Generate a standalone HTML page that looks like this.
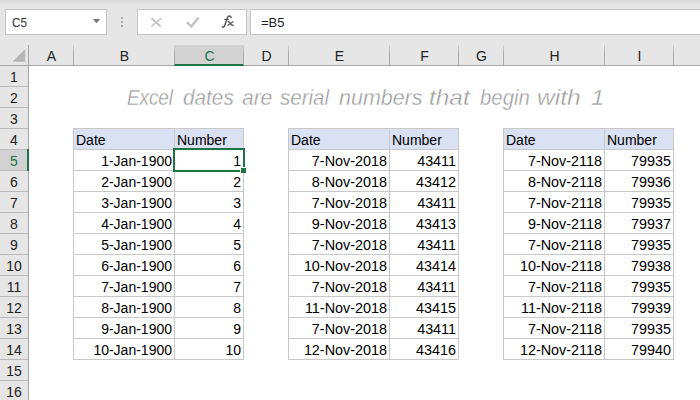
<!DOCTYPE html>
<html><head><meta charset="utf-8"><style>
html,body{margin:0;padding:0;width:700px;height:400px;overflow:hidden;background:#fff}
body{position:relative;font-family:"Liberation Sans", sans-serif}
body>div{position:absolute}
.t{font-size:14px;line-height:20px;white-space:nowrap}
svg{display:block}
</style></head><body>
<div style="left:0px;top:0px;width:700px;height:45px;background:#e6e6e6;"></div>
<div style="left:0;top:0;width:700px;height:5px;background:linear-gradient(#d8d8d8,#e6e6e6)"></div>
<div style="left:5px;top:9px;width:102px;height:26px;background:#c6c6c6;"></div>
<div style="left:6px;top:10px;width:100px;height:24px;background:#ffffff;"></div>
<div class="t" style="left:11.50px;top:12.50px;color:#333;font-size:13px;transform:scaleX(0.9);transform-origin:0 0;">C5</div>
<svg style="position:absolute;left:92px;top:18px" width="9" height="7"><path d="M0.8 1 L8.2 1 L4.5 5.2 Z" fill="#767676"/></svg>
<div style="left:121px;top:17px;width:2px;height:2px;background:#a8a8a8;"></div>
<div style="left:121px;top:21px;width:2px;height:2px;background:#a8a8a8;"></div>
<div style="left:121px;top:25px;width:2px;height:2px;background:#a8a8a8;"></div>
<div style="left:137px;top:9px;width:110px;height:26px;background:#c6c6c6;"></div>
<div style="left:138px;top:10px;width:108px;height:24px;background:#ffffff;"></div>
<svg style="position:absolute;left:0;top:0" width="250" height="40"><path d="M151.6 18.2 L160.6 26.4" stroke="#c2c2c2" stroke-width="2.1" fill="none"/><path d="M161.4 18 L151.4 26.4" stroke="#c6c6c6" stroke-width="1.6" fill="none"/><path d="M187 22.2 L191.2 26.6 L198.6 17.6" stroke="#c4c4c4" stroke-width="2.5" fill="none" stroke-linejoin="round"/><path d="M231 17.4 C230.7 15.7 228.3 15.6 227.6 17.2 L224.6 25.8 C224.1 27.4 222.9 27.6 222.4 26.6" stroke="#5a5a5a" stroke-width="1.5" fill="none" stroke-linecap="round"/><path d="M224.2 19.5 L228.8 19.5" stroke="#5a5a5a" stroke-width="1.2" fill="none"/><path d="M227.6 21.8 C229.2 21.2 229.8 22.5 230.4 23.6 C231 24.8 232 25.6 233.6 25.2" stroke="#5a5a5a" stroke-width="1.4" fill="none"/><path d="M233.6 21.6 L227.4 25.6" stroke="#5a5a5a" stroke-width="1.2" fill="none"/></svg>
<div style="left:250px;top:9px;width:450px;height:26px;background:#c6c6c6;"></div>
<div style="left:251px;top:10px;width:449px;height:24px;background:#ffffff;"></div>
<div class="t" style="left:261.00px;top:12.50px;color:#222;font-size:13px;">=B5</div>
<div style="left:0px;top:45px;width:700px;height:20px;background:#e6e6e6;"></div>
<div style="left:175px;top:45px;width:68px;height:20px;background:#d2d2d2;"></div>
<div style="left:0px;top:65px;width:700px;height:1px;background:#a6a6a6;"></div>
<div style="left:174px;top:64px;width:70px;height:2px;background:#217346;"></div>
<div style="left:28px;top:45px;width:1px;height:20px;background:linear-gradient(#d4d4d4,#b0b0b0 35%,#a8a8a8)"></div>
<div style="left:73px;top:45px;width:1px;height:20px;background:linear-gradient(#d4d4d4,#b0b0b0 35%,#a8a8a8)"></div>
<div style="left:174px;top:45px;width:1px;height:20px;background:linear-gradient(#d4d4d4,#b0b0b0 35%,#a8a8a8)"></div>
<div style="left:243px;top:45px;width:1px;height:20px;background:linear-gradient(#d4d4d4,#b0b0b0 35%,#a8a8a8)"></div>
<div style="left:288px;top:45px;width:1px;height:20px;background:linear-gradient(#d4d4d4,#b0b0b0 35%,#a8a8a8)"></div>
<div style="left:389px;top:45px;width:1px;height:20px;background:linear-gradient(#d4d4d4,#b0b0b0 35%,#a8a8a8)"></div>
<div style="left:458px;top:45px;width:1px;height:20px;background:linear-gradient(#d4d4d4,#b0b0b0 35%,#a8a8a8)"></div>
<div style="left:503px;top:45px;width:1px;height:20px;background:linear-gradient(#d4d4d4,#b0b0b0 35%,#a8a8a8)"></div>
<div style="left:604px;top:45px;width:1px;height:20px;background:linear-gradient(#d4d4d4,#b0b0b0 35%,#a8a8a8)"></div>
<div style="left:673px;top:45px;width:1px;height:20px;background:linear-gradient(#d4d4d4,#b0b0b0 35%,#a8a8a8)"></div>
<div class="t" style="left:21.50px;top:46.15px;width:60px;text-align:center;color:#222;font-size:14px;">A</div>
<div class="t" style="left:94.50px;top:46.15px;width:60px;text-align:center;color:#222;font-size:14px;">B</div>
<div class="t" style="left:179.50px;top:46.15px;width:60px;text-align:center;color:#217346;font-size:14px;">C</div>
<div class="t" style="left:236.50px;top:46.15px;width:60px;text-align:center;color:#222;font-size:14px;">D</div>
<div class="t" style="left:309.50px;top:46.15px;width:60px;text-align:center;color:#222;font-size:14px;">E</div>
<div class="t" style="left:394.50px;top:46.15px;width:60px;text-align:center;color:#222;font-size:14px;">F</div>
<div class="t" style="left:451.50px;top:46.15px;width:60px;text-align:center;color:#222;font-size:14px;">G</div>
<div class="t" style="left:524.50px;top:46.15px;width:60px;text-align:center;color:#222;font-size:14px;">H</div>
<div class="t" style="left:609.50px;top:46.15px;width:60px;text-align:center;color:#222;font-size:14px;">I</div>
<svg style="position:absolute;left:12px;top:48px" width="14" height="14"><path d="M13 1.2 L13 13.8 L0.5 13.8 Z" fill="#b6b6b6"/></svg>
<div style="left:0px;top:66px;width:28px;height:334px;background:#e6e6e6;"></div>
<div style="left:28px;top:45px;width:1px;height:355px;background:#a6a6a6;"></div>
<div style="left:0px;top:86px;width:28px;height:1px;background:#b9b9b9;"></div>
<div class="t" style="left:0.00px;top:67.15px;width:28px;text-align:center;color:#222;font-size:14px;">1</div>
<div style="left:0px;top:107px;width:28px;height:1px;background:#b9b9b9;"></div>
<div class="t" style="left:0.00px;top:88.15px;width:28px;text-align:center;color:#222;font-size:14px;">2</div>
<div style="left:0px;top:128px;width:28px;height:1px;background:#b9b9b9;"></div>
<div class="t" style="left:0.00px;top:109.15px;width:28px;text-align:center;color:#222;font-size:14px;">3</div>
<div style="left:0px;top:149px;width:28px;height:1px;background:#b9b9b9;"></div>
<div class="t" style="left:0.00px;top:130.15px;width:28px;text-align:center;color:#222;font-size:14px;">4</div>
<div style="left:0px;top:150px;width:28px;height:20px;background:#d2d2d2;"></div>
<div style="left:0px;top:170px;width:28px;height:1px;background:#b9b9b9;"></div>
<div style="left:27px;top:149px;width:2px;height:22px;background:#217346;"></div>
<div class="t" style="left:0.00px;top:151.15px;width:28px;text-align:center;color:#217346;font-size:14px;">5</div>
<div style="left:0px;top:191px;width:28px;height:1px;background:#b9b9b9;"></div>
<div class="t" style="left:0.00px;top:172.15px;width:28px;text-align:center;color:#222;font-size:14px;">6</div>
<div style="left:0px;top:212px;width:28px;height:1px;background:#b9b9b9;"></div>
<div class="t" style="left:0.00px;top:193.15px;width:28px;text-align:center;color:#222;font-size:14px;">7</div>
<div style="left:0px;top:233px;width:28px;height:1px;background:#b9b9b9;"></div>
<div class="t" style="left:0.00px;top:214.15px;width:28px;text-align:center;color:#222;font-size:14px;">8</div>
<div style="left:0px;top:254px;width:28px;height:1px;background:#b9b9b9;"></div>
<div class="t" style="left:0.00px;top:235.15px;width:28px;text-align:center;color:#222;font-size:14px;">9</div>
<div style="left:0px;top:275px;width:28px;height:1px;background:#b9b9b9;"></div>
<div class="t" style="left:0.00px;top:256.15px;width:28px;text-align:center;color:#222;font-size:14px;">10</div>
<div style="left:0px;top:296px;width:28px;height:1px;background:#b9b9b9;"></div>
<div class="t" style="left:0.00px;top:277.15px;width:28px;text-align:center;color:#222;font-size:14px;">11</div>
<div style="left:0px;top:317px;width:28px;height:1px;background:#b9b9b9;"></div>
<div class="t" style="left:0.00px;top:298.15px;width:28px;text-align:center;color:#222;font-size:14px;">12</div>
<div style="left:0px;top:338px;width:28px;height:1px;background:#b9b9b9;"></div>
<div class="t" style="left:0.00px;top:319.15px;width:28px;text-align:center;color:#222;font-size:14px;">13</div>
<div style="left:0px;top:359px;width:28px;height:1px;background:#b9b9b9;"></div>
<div class="t" style="left:0.00px;top:340.15px;width:28px;text-align:center;color:#222;font-size:14px;">14</div>
<div style="left:0px;top:380px;width:28px;height:1px;background:#b9b9b9;"></div>
<div class="t" style="left:0.00px;top:361.15px;width:28px;text-align:center;color:#222;font-size:14px;">15</div>
<div class="t" style="left:0.00px;top:382.15px;width:28px;text-align:center;color:#222;font-size:14px;">16</div>
<div style="left:29px;top:66px;width:671px;height:334px;background:#ffffff;"></div>
<div class="t" style="left:127.0px;top:85px;font-size:22px;line-height:26px;font-style:italic;color:#9c9c9c;-webkit-text-stroke:0.35px #fff;transform:scaleX(0.855);transform-origin:0 0">Excel</div>
<div class="t" style="left:182.5px;top:85px;font-size:22px;line-height:26px;font-style:italic;color:#9c9c9c;-webkit-text-stroke:0.35px #fff;transform:scaleX(0.943);transform-origin:0 0">dates</div>
<div class="t" style="left:242.0px;top:85px;font-size:22px;line-height:26px;font-style:italic;color:#9c9c9c;-webkit-text-stroke:0.35px #fff;transform:scaleX(0.952);transform-origin:0 0">are</div>
<div class="t" style="left:279.5px;top:85px;font-size:22px;line-height:26px;font-style:italic;color:#9c9c9c;-webkit-text-stroke:0.35px #fff;transform:scaleX(0.934);transform-origin:0 0">serial</div>
<div class="t" style="left:339.0px;top:85px;font-size:22px;line-height:26px;font-style:italic;color:#9c9c9c;-webkit-text-stroke:0.35px #fff;transform:scaleX(0.976);transform-origin:0 0">numbers</div>
<div class="t" style="left:428.89px;top:85px;font-size:22px;line-height:26px;font-style:italic;color:#9c9c9c;-webkit-text-stroke:0.35px #fff;transform:scaleX(1.108);transform-origin:0 0">that</div>
<div class="t" style="left:480.0px;top:85px;font-size:22px;line-height:26px;font-style:italic;color:#9c9c9c;-webkit-text-stroke:0.35px #fff;transform:scaleX(0.925);transform-origin:0 0">begin</div>
<div class="t" style="left:537.38px;top:85px;font-size:22px;line-height:26px;font-style:italic;color:#9c9c9c;-webkit-text-stroke:0.35px #fff;transform:scaleX(1.118);transform-origin:0 0">with</div>
<div class="t" style="left:591.0px;top:85px;font-size:22px;line-height:26px;font-style:italic;color:#9c9c9c;-webkit-text-stroke:0.35px #fff;transform:scaleX(1.091);transform-origin:0 0">1</div>
<div style="left:74px;top:129px;width:169px;height:20px;background:#d9e1f2;"></div>
<div style="left:73px;top:128px;width:171px;height:1px;background:#c8c8c8;"></div>
<div style="left:73px;top:149px;width:171px;height:1px;background:#c8c8c8;"></div>
<div style="left:73px;top:170px;width:171px;height:1px;background:#c8c8c8;"></div>
<div style="left:73px;top:191px;width:171px;height:1px;background:#c8c8c8;"></div>
<div style="left:73px;top:212px;width:171px;height:1px;background:#c8c8c8;"></div>
<div style="left:73px;top:233px;width:171px;height:1px;background:#c8c8c8;"></div>
<div style="left:73px;top:254px;width:171px;height:1px;background:#c8c8c8;"></div>
<div style="left:73px;top:275px;width:171px;height:1px;background:#c8c8c8;"></div>
<div style="left:73px;top:296px;width:171px;height:1px;background:#c8c8c8;"></div>
<div style="left:73px;top:317px;width:171px;height:1px;background:#c8c8c8;"></div>
<div style="left:73px;top:338px;width:171px;height:1px;background:#c8c8c8;"></div>
<div style="left:73px;top:359px;width:171px;height:1px;background:#c8c8c8;"></div>
<div style="left:73px;top:128px;width:1px;height:232px;background:#c8c8c8;"></div>
<div style="left:174px;top:128px;width:1px;height:232px;background:#c8c8c8;"></div>
<div style="left:243px;top:128px;width:1px;height:232px;background:#c8c8c8;"></div>
<div class="t" style="left:76.00px;top:130.15px;color:#000000;font-size:14px;">Date</div>
<div class="t" style="left:177.00px;top:130.15px;color:#000000;font-size:14px;">Number</div>
<div class="t" style="left:-28.00px;top:151.15px;width:200px;text-align:right;color:#000000;font-size:14px;">1-Jan-1900</div>
<div class="t" style="left:41.00px;top:151.15px;width:200px;text-align:right;color:#000000;font-size:14px;">1</div>
<div class="t" style="left:-28.00px;top:172.15px;width:200px;text-align:right;color:#000000;font-size:14px;">2-Jan-1900</div>
<div class="t" style="left:41.00px;top:172.15px;width:200px;text-align:right;color:#000000;font-size:14px;">2</div>
<div class="t" style="left:-28.00px;top:193.15px;width:200px;text-align:right;color:#000000;font-size:14px;">3-Jan-1900</div>
<div class="t" style="left:41.00px;top:193.15px;width:200px;text-align:right;color:#000000;font-size:14px;">3</div>
<div class="t" style="left:-28.00px;top:214.15px;width:200px;text-align:right;color:#000000;font-size:14px;">4-Jan-1900</div>
<div class="t" style="left:41.00px;top:214.15px;width:200px;text-align:right;color:#000000;font-size:14px;">4</div>
<div class="t" style="left:-28.00px;top:235.15px;width:200px;text-align:right;color:#000000;font-size:14px;">5-Jan-1900</div>
<div class="t" style="left:41.00px;top:235.15px;width:200px;text-align:right;color:#000000;font-size:14px;">5</div>
<div class="t" style="left:-28.00px;top:256.15px;width:200px;text-align:right;color:#000000;font-size:14px;">6-Jan-1900</div>
<div class="t" style="left:41.00px;top:256.15px;width:200px;text-align:right;color:#000000;font-size:14px;">6</div>
<div class="t" style="left:-28.00px;top:277.15px;width:200px;text-align:right;color:#000000;font-size:14px;">7-Jan-1900</div>
<div class="t" style="left:41.00px;top:277.15px;width:200px;text-align:right;color:#000000;font-size:14px;">7</div>
<div class="t" style="left:-28.00px;top:298.15px;width:200px;text-align:right;color:#000000;font-size:14px;">8-Jan-1900</div>
<div class="t" style="left:41.00px;top:298.15px;width:200px;text-align:right;color:#000000;font-size:14px;">8</div>
<div class="t" style="left:-28.00px;top:319.15px;width:200px;text-align:right;color:#000000;font-size:14px;">9-Jan-1900</div>
<div class="t" style="left:41.00px;top:319.15px;width:200px;text-align:right;color:#000000;font-size:14px;">9</div>
<div class="t" style="left:-28.00px;top:340.15px;width:200px;text-align:right;color:#000000;font-size:14px;">10-Jan-1900</div>
<div class="t" style="left:41.00px;top:340.15px;width:200px;text-align:right;color:#000000;font-size:14px;">10</div>
<div style="left:289px;top:129px;width:169px;height:20px;background:#d9e1f2;"></div>
<div style="left:288px;top:128px;width:171px;height:1px;background:#c8c8c8;"></div>
<div style="left:288px;top:149px;width:171px;height:1px;background:#c8c8c8;"></div>
<div style="left:288px;top:170px;width:171px;height:1px;background:#c8c8c8;"></div>
<div style="left:288px;top:191px;width:171px;height:1px;background:#c8c8c8;"></div>
<div style="left:288px;top:212px;width:171px;height:1px;background:#c8c8c8;"></div>
<div style="left:288px;top:233px;width:171px;height:1px;background:#c8c8c8;"></div>
<div style="left:288px;top:254px;width:171px;height:1px;background:#c8c8c8;"></div>
<div style="left:288px;top:275px;width:171px;height:1px;background:#c8c8c8;"></div>
<div style="left:288px;top:296px;width:171px;height:1px;background:#c8c8c8;"></div>
<div style="left:288px;top:317px;width:171px;height:1px;background:#c8c8c8;"></div>
<div style="left:288px;top:338px;width:171px;height:1px;background:#c8c8c8;"></div>
<div style="left:288px;top:359px;width:171px;height:1px;background:#c8c8c8;"></div>
<div style="left:288px;top:128px;width:1px;height:232px;background:#c8c8c8;"></div>
<div style="left:389px;top:128px;width:1px;height:232px;background:#c8c8c8;"></div>
<div style="left:458px;top:128px;width:1px;height:232px;background:#c8c8c8;"></div>
<div class="t" style="left:291.00px;top:130.15px;color:#000000;font-size:14px;">Date</div>
<div class="t" style="left:392.00px;top:130.15px;color:#000000;font-size:14px;">Number</div>
<div class="t" style="left:187.00px;top:151.15px;width:200px;text-align:right;color:#000000;font-size:14px;transform:scaleX(1.027);transform-origin:100% 0;">7-Nov-2018</div>
<div class="t" style="left:256.00px;top:151.15px;width:200px;text-align:right;color:#000000;font-size:14px;transform:scaleX(1.025);transform-origin:100% 0;">43411</div>
<div class="t" style="left:187.00px;top:172.15px;width:200px;text-align:right;color:#000000;font-size:14px;transform:scaleX(1.027);transform-origin:100% 0;">8-Nov-2018</div>
<div class="t" style="left:256.00px;top:172.15px;width:200px;text-align:right;color:#000000;font-size:14px;transform:scaleX(1.025);transform-origin:100% 0;">43412</div>
<div class="t" style="left:187.00px;top:193.15px;width:200px;text-align:right;color:#000000;font-size:14px;transform:scaleX(1.027);transform-origin:100% 0;">7-Nov-2018</div>
<div class="t" style="left:256.00px;top:193.15px;width:200px;text-align:right;color:#000000;font-size:14px;transform:scaleX(1.025);transform-origin:100% 0;">43411</div>
<div class="t" style="left:187.00px;top:214.15px;width:200px;text-align:right;color:#000000;font-size:14px;transform:scaleX(1.027);transform-origin:100% 0;">9-Nov-2018</div>
<div class="t" style="left:256.00px;top:214.15px;width:200px;text-align:right;color:#000000;font-size:14px;transform:scaleX(1.025);transform-origin:100% 0;">43413</div>
<div class="t" style="left:187.00px;top:235.15px;width:200px;text-align:right;color:#000000;font-size:14px;transform:scaleX(1.027);transform-origin:100% 0;">7-Nov-2018</div>
<div class="t" style="left:256.00px;top:235.15px;width:200px;text-align:right;color:#000000;font-size:14px;transform:scaleX(1.025);transform-origin:100% 0;">43411</div>
<div class="t" style="left:187.00px;top:256.15px;width:200px;text-align:right;color:#000000;font-size:14px;transform:scaleX(1.027);transform-origin:100% 0;">10-Nov-2018</div>
<div class="t" style="left:256.00px;top:256.15px;width:200px;text-align:right;color:#000000;font-size:14px;transform:scaleX(1.025);transform-origin:100% 0;">43414</div>
<div class="t" style="left:187.00px;top:277.15px;width:200px;text-align:right;color:#000000;font-size:14px;transform:scaleX(1.027);transform-origin:100% 0;">7-Nov-2018</div>
<div class="t" style="left:256.00px;top:277.15px;width:200px;text-align:right;color:#000000;font-size:14px;transform:scaleX(1.025);transform-origin:100% 0;">43411</div>
<div class="t" style="left:187.00px;top:298.15px;width:200px;text-align:right;color:#000000;font-size:14px;transform:scaleX(1.027);transform-origin:100% 0;">11-Nov-2018</div>
<div class="t" style="left:256.00px;top:298.15px;width:200px;text-align:right;color:#000000;font-size:14px;transform:scaleX(1.025);transform-origin:100% 0;">43415</div>
<div class="t" style="left:187.00px;top:319.15px;width:200px;text-align:right;color:#000000;font-size:14px;transform:scaleX(1.027);transform-origin:100% 0;">7-Nov-2018</div>
<div class="t" style="left:256.00px;top:319.15px;width:200px;text-align:right;color:#000000;font-size:14px;transform:scaleX(1.025);transform-origin:100% 0;">43411</div>
<div class="t" style="left:187.00px;top:340.15px;width:200px;text-align:right;color:#000000;font-size:14px;transform:scaleX(1.027);transform-origin:100% 0;">12-Nov-2018</div>
<div class="t" style="left:256.00px;top:340.15px;width:200px;text-align:right;color:#000000;font-size:14px;transform:scaleX(1.025);transform-origin:100% 0;">43416</div>
<div style="left:504px;top:129px;width:169px;height:20px;background:#d9e1f2;"></div>
<div style="left:503px;top:128px;width:171px;height:1px;background:#c8c8c8;"></div>
<div style="left:503px;top:149px;width:171px;height:1px;background:#c8c8c8;"></div>
<div style="left:503px;top:170px;width:171px;height:1px;background:#c8c8c8;"></div>
<div style="left:503px;top:191px;width:171px;height:1px;background:#c8c8c8;"></div>
<div style="left:503px;top:212px;width:171px;height:1px;background:#c8c8c8;"></div>
<div style="left:503px;top:233px;width:171px;height:1px;background:#c8c8c8;"></div>
<div style="left:503px;top:254px;width:171px;height:1px;background:#c8c8c8;"></div>
<div style="left:503px;top:275px;width:171px;height:1px;background:#c8c8c8;"></div>
<div style="left:503px;top:296px;width:171px;height:1px;background:#c8c8c8;"></div>
<div style="left:503px;top:317px;width:171px;height:1px;background:#c8c8c8;"></div>
<div style="left:503px;top:338px;width:171px;height:1px;background:#c8c8c8;"></div>
<div style="left:503px;top:359px;width:171px;height:1px;background:#c8c8c8;"></div>
<div style="left:503px;top:128px;width:1px;height:232px;background:#c8c8c8;"></div>
<div style="left:604px;top:128px;width:1px;height:232px;background:#c8c8c8;"></div>
<div style="left:673px;top:128px;width:1px;height:232px;background:#c8c8c8;"></div>
<div class="t" style="left:506.00px;top:130.15px;color:#000000;font-size:14px;">Date</div>
<div class="t" style="left:607.00px;top:130.15px;color:#000000;font-size:14px;">Number</div>
<div class="t" style="left:402.00px;top:151.15px;width:200px;text-align:right;color:#000000;font-size:14px;transform:scaleX(1.027);transform-origin:100% 0;">7-Nov-2118</div>
<div class="t" style="left:471.00px;top:151.15px;width:200px;text-align:right;color:#000000;font-size:14px;transform:scaleX(1.025);transform-origin:100% 0;">79935</div>
<div class="t" style="left:402.00px;top:172.15px;width:200px;text-align:right;color:#000000;font-size:14px;transform:scaleX(1.027);transform-origin:100% 0;">8-Nov-2118</div>
<div class="t" style="left:471.00px;top:172.15px;width:200px;text-align:right;color:#000000;font-size:14px;transform:scaleX(1.025);transform-origin:100% 0;">79936</div>
<div class="t" style="left:402.00px;top:193.15px;width:200px;text-align:right;color:#000000;font-size:14px;transform:scaleX(1.027);transform-origin:100% 0;">7-Nov-2118</div>
<div class="t" style="left:471.00px;top:193.15px;width:200px;text-align:right;color:#000000;font-size:14px;transform:scaleX(1.025);transform-origin:100% 0;">79935</div>
<div class="t" style="left:402.00px;top:214.15px;width:200px;text-align:right;color:#000000;font-size:14px;transform:scaleX(1.027);transform-origin:100% 0;">9-Nov-2118</div>
<div class="t" style="left:471.00px;top:214.15px;width:200px;text-align:right;color:#000000;font-size:14px;transform:scaleX(1.025);transform-origin:100% 0;">79937</div>
<div class="t" style="left:402.00px;top:235.15px;width:200px;text-align:right;color:#000000;font-size:14px;transform:scaleX(1.027);transform-origin:100% 0;">7-Nov-2118</div>
<div class="t" style="left:471.00px;top:235.15px;width:200px;text-align:right;color:#000000;font-size:14px;transform:scaleX(1.025);transform-origin:100% 0;">79935</div>
<div class="t" style="left:402.00px;top:256.15px;width:200px;text-align:right;color:#000000;font-size:14px;transform:scaleX(1.027);transform-origin:100% 0;">10-Nov-2118</div>
<div class="t" style="left:471.00px;top:256.15px;width:200px;text-align:right;color:#000000;font-size:14px;transform:scaleX(1.025);transform-origin:100% 0;">79938</div>
<div class="t" style="left:402.00px;top:277.15px;width:200px;text-align:right;color:#000000;font-size:14px;transform:scaleX(1.027);transform-origin:100% 0;">7-Nov-2118</div>
<div class="t" style="left:471.00px;top:277.15px;width:200px;text-align:right;color:#000000;font-size:14px;transform:scaleX(1.025);transform-origin:100% 0;">79935</div>
<div class="t" style="left:402.00px;top:298.15px;width:200px;text-align:right;color:#000000;font-size:14px;transform:scaleX(1.027);transform-origin:100% 0;">11-Nov-2118</div>
<div class="t" style="left:471.00px;top:298.15px;width:200px;text-align:right;color:#000000;font-size:14px;transform:scaleX(1.025);transform-origin:100% 0;">79939</div>
<div class="t" style="left:402.00px;top:319.15px;width:200px;text-align:right;color:#000000;font-size:14px;transform:scaleX(1.027);transform-origin:100% 0;">7-Nov-2118</div>
<div class="t" style="left:471.00px;top:319.15px;width:200px;text-align:right;color:#000000;font-size:14px;transform:scaleX(1.025);transform-origin:100% 0;">79935</div>
<div class="t" style="left:402.00px;top:340.15px;width:200px;text-align:right;color:#000000;font-size:14px;transform:scaleX(1.027);transform-origin:100% 0;">12-Nov-2118</div>
<div class="t" style="left:471.00px;top:340.15px;width:200px;text-align:right;color:#000000;font-size:14px;transform:scaleX(1.025);transform-origin:100% 0;">79940</div>
<div style="left:173px;top:148px;width:72px;height:2px;background:#217346;"></div>
<div style="left:173px;top:148px;width:2px;height:24px;background:#217346;"></div>
<div style="left:243px;top:148px;width:2px;height:19px;background:#217346;"></div>
<div style="left:173px;top:170px;width:67px;height:2px;background:#217346;"></div>
<div style="left:240px;top:167px;width:6px;height:6px;background:#ffffff;"></div>
<div style="left:241px;top:168px;width:5px;height:5px;background:#217346;"></div>
</body></html>
